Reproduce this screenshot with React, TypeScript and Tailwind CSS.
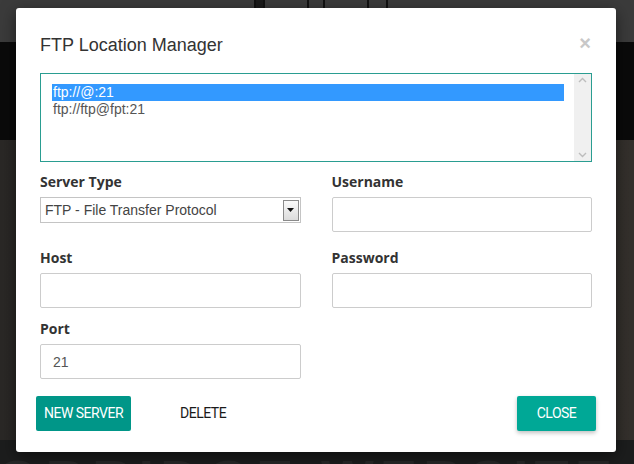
import React from "react";

const labelCls = "block text-[14px] font-bold text-[#333] leading-[20px] mb-[5px]";
const inputCls = "w-full h-[35px] border border-[#cccccc] rounded-[2px] bg-white px-3 text-[14px] text-[#555]";

const App = () => {
  return (
    <div className="relative w-[634px] h-[464px] overflow-hidden" style={{ fontFamily: "'Liberation Sans', Arial, sans-serif" }}>
      {/* Page behind the modal */}
      <div className="flex flex-col h-full">
        <div className="h-[42px] bg-[#3b3b3b] flex items-start justify-center gap-[42px] pl-[8px]">
          <div className="w-[11px] h-[10px] border-2 border-[#111] border-t-0 rounded-b-[2px] bg-[#1a1a1a]" />
          <div className="w-[18px] h-[10px] border-2 border-[#111] border-t-0 rounded-b-[2px]" />
          <div className="w-[21px] h-[10px] border-2 border-[#111] border-t-0 rounded-b-[2px]" />
        </div>
        <div className="h-[98px] bg-[#0a0a0a]" />
        <div className="h-[300px] bg-gradient-to-r from-[#2a2826] via-[#2f2c29] to-[#34302c]" />
        <div className="flex-1 bg-[#1c1d1d] overflow-hidden">
          <div className="text-[56px] font-bold tracking-[6px] text-[#272828] leading-none mt-[12px] -ml-[4px] whitespace-nowrap">
            OBRIDGE WEBSITE BUILDER
          </div>
        </div>
      </div>

      {/* Modal */}
      <div className="absolute left-[16px] top-[8px] w-[600px] h-[444px] bg-white rounded-[3px] shadow-[0_4px_16px_rgba(0,0,0,0.5)] flex flex-col">
        <div className="flex items-start justify-between px-6 pt-[26px]">
          <h2 className="text-[18px] leading-[22px] text-[#333]">FTP Location Manager</h2>
          <span className="text-[20px] leading-[16px] font-bold text-[#c8c8c8] mr-[1px] mt-[1px]">×</span>
        </div>

        <div className="px-6">
          <div className="mt-[17px] h-[89px] border border-[#2a9d91] flex">
            <div className="flex-1 pl-[11px] pr-[10px] pt-[10px] text-[14px] leading-[17px]">
              <div className="bg-[#3399ff] text-white pl-[1px]">ftp://@:21</div>
              <div className="text-[#555] pl-[1px]">ftp://ftp@fpt:21</div>
            </div>
            <div className="w-[17px] bg-[#f0f0f0] flex flex-col justify-between items-center py-[3px] text-[#c0c0c0]">
              <svg width="9" height="6" viewBox="0 0 9 6"><path d="M1 5 L4.5 1.5 L8 5" stroke="#bdbdbd" strokeWidth="1.4" fill="none" /></svg>
              <svg width="9" height="6" viewBox="0 0 9 6"><path d="M1 1 L4.5 4.5 L8 1" stroke="#bdbdbd" strokeWidth="1.4" fill="none" /></svg>
            </div>
          </div>

          <div className="grid grid-cols-2 gap-x-[31px] mt-[10px]" style={{ fontFamily: "'Open Sans', 'Liberation Sans', sans-serif" }}>
            <div>
              <label className={labelCls}>Server Type</label>
              <div className="h-[26px] border border-[#c4c4c4] flex items-center justify-between pl-[4px] pr-[1px]" style={{ fontFamily: "'Liberation Sans', Arial, sans-serif" }}>
                <span className="text-[14px] text-[#444]">FTP - File Transfer Protocol</span>
                <div className="w-[16px] h-[21px] border border-[#8a8a8a] bg-gradient-to-b from-[#fafafa] to-[#dcdcdc] flex items-center justify-center">
                  <svg width="7" height="4" viewBox="0 0 7 4"><path d="M0 0 H7 L3.5 4 Z" fill="#111" /></svg>
                </div>
              </div>
            </div>
            <div>
              <label className={labelCls}>Username</label>
              <input className={inputCls} />
            </div>

            <div className="mt-[16px]">
              <label className={labelCls}>Host</label>
              <input className={inputCls} />
            </div>
            <div className="mt-[16px]">
              <label className={labelCls}>Password</label>
              <input className={inputCls} type="password" />
            </div>

            <div className="mt-[11px]">
              <label className={labelCls}>Port</label>
              <input className={inputCls + " font-['Liberation_Sans']"} defaultValue="21" />
            </div>
          </div>
        </div>

        <div className="flex items-center justify-between px-5 mt-[17px]" style={{ fontFamily: "Roboto, 'Liberation Sans', sans-serif" }}>
          <div className="flex items-center">
            <button className="h-[35px] w-[95px] bg-[#009688] text-white text-[14px] tracking-[-0.5px] rounded-[2px]">NEW SERVER</button>
            <button className="h-[35px] ml-[49px] text-[#1a1a1a] text-[14px] tracking-[-0.5px]">DELETE</button>
          </div>
          <button className="h-[35px] w-[79px] bg-[#00a896] text-white text-[14px] tracking-[-0.5px] rounded-[2px] shadow-[0_2px_4px_rgba(0,0,0,0.25)]">CLOSE</button>
        </div>
      </div>
    </div>
  );
};

export default App;
